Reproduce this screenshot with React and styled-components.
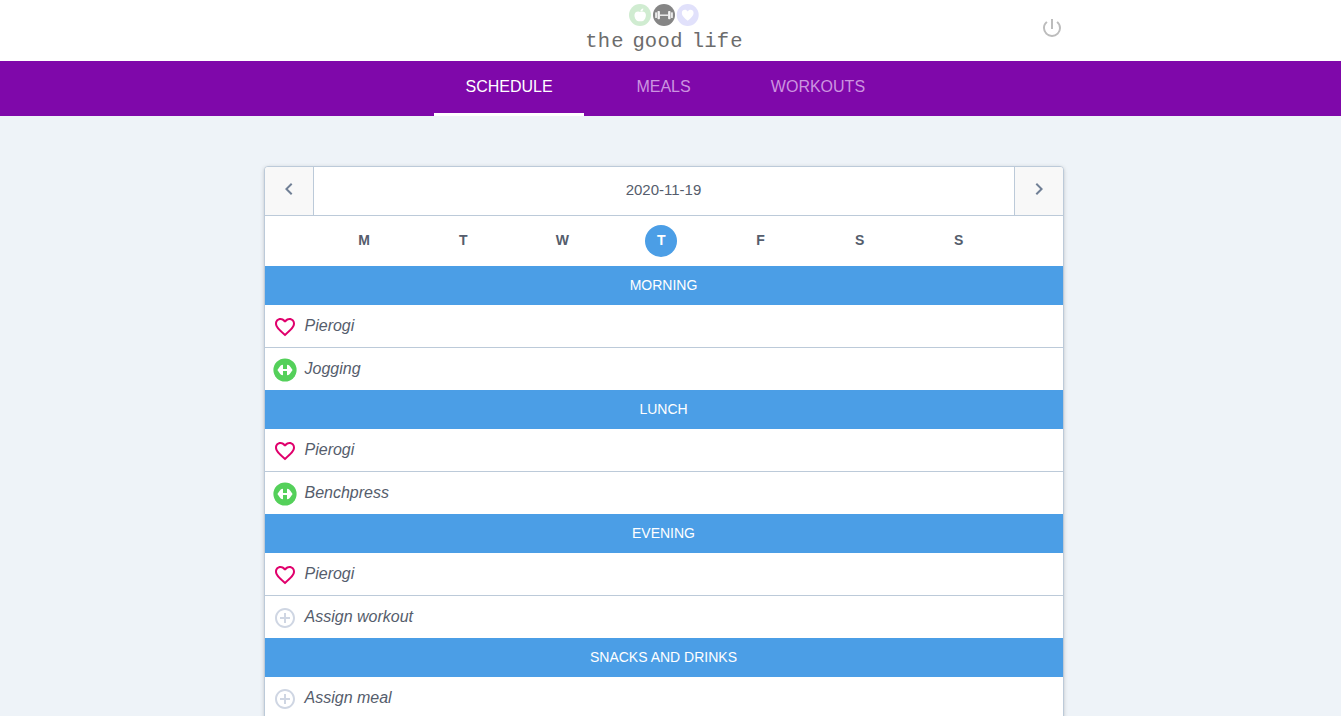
import React from "react";
import styled, { createGlobalStyle } from "styled-components";
import {
  MdAddCircleOutline,
  MdChevronLeft,
  MdChevronRight,
  MdFavoriteBorder,
  MdPowerSettingsNew,
} from "react-icons/md";

const GlobalStyle = createGlobalStyle`
  *, *::before, *::after { box-sizing: border-box; }
  html, body { margin: 0; height: 100%; overflow: hidden; }
  body {
    background: #eef3f8;
    color: #555d6c;
    font-family: "Liberation Sans", Arial, sans-serif;
    font-size: 16px;
    line-height: 24px;
  }
  svg { display: block; }
`;

const Page = styled.div`
  height: 716px;
  overflow: hidden;
`;

const TopBar = styled.header`
  height: 61px;
  padding-right: 13px;
  background: #fff;
`;

const TopBarInner = styled.div`
  display: grid;
  grid-template-columns: 1fr auto 1fr;
  width: 800px;
  height: 56px;
  margin: 0 auto;
`;

const LogoSlot = styled.div`
  grid-column: 2;
`;

const PowerButton = styled.button`
  grid-column: 3;
  justify-self: end;
  align-self: center;
  padding: 0;
  border: 0;
  background: none;
  color: #bcbcbc;
  font-size: 24px;
`;

const Nav = styled.nav`
  display: flex;
  justify-content: center;
  gap: 4.45px;
  height: 55px;
  padding-right: 14px;
  background: #7f08aa;
`;

const Tab = styled.a`
  width: 150px;
  padding-top: 14px;
  text-align: center;
  color: ${(p) => (p.$active ? "#fff" : "#cc94e0")};
  border-bottom: 3px solid ${(p) => (p.$active ? "#fff" : "transparent")};
`;

const Main = styled.main`
  padding: 50px 14px 0 0;
`;

const Card = styled.section`
  width: 800px;
  margin: 0 auto;
  border: 1px solid #bccad9;
  border-radius: 4px;
  background: #fff;
  overflow: hidden;
  box-shadow: 0 1px 3px rgba(0, 0, 0, 0.1), 0 1px 5px rgba(0, 0, 0, 0.1);
`;

const DateBar = styled.div`
  display: flex;
  height: 49px;
  border-bottom: 1px solid #bccad9;
`;

const Arrow = styled.button`
  display: flex;
  align-items: center;
  justify-content: center;
  width: 49px;
  padding: 0 0 4px;
  border: 0 solid #bccad9;
  border-left-width: ${(p) => (p.$side === "right" ? "1px" : 0)};
  border-right-width: ${(p) => (p.$side === "left" ? "1px" : 0)};
  background: #f8f8f8;
  color: #718096;
  font-size: 24px;
`;

const DateLabel = styled.div`
  flex: 1;
  padding-top: 11px;
  text-align: center;
  font-size: 15px;
`;

const Week = styled.div`
  display: flex;
  gap: 67.1px;
  height: 50px;
  padding: 9px 0 0 83.6px;
`;

const Day = styled.div`
  flex: none;
  width: 32px;
  height: 32px;
  border-radius: 50%;
  text-align: center;
  font-size: 14px;
  font-weight: 700;
  line-height: 31px;
  background: ${(p) => (p.$active ? "#4b9ee6" : "transparent")};
  color: ${(p) => (p.$active ? "#fff" : "inherit")};
`;

const SectionTitle = styled.h2`
  height: 39px;
  margin: 0;
  background: #4b9ee6;
  color: #fff;
  text-align: center;
  font-size: 14px;
  font-weight: 400;
  line-height: 39px;
`;

const Row = styled.div`
  display: flex;
  gap: 8px;
  height: 42px;
  padding: 10px 8px 0;
  font-style: italic;

  & + & {
    height: 43px;
    border-top: 1px solid #bccad9;
  }
`;

const RowIcon = styled.span`
  color: ${(p) => p.$color};
  font-size: 24px;
`;

const RowText = styled.span`
  margin-top: -1px;
`;

const Dumbbell = () => (
  <svg width="24" height="24" viewBox="0 0 24 24">
    <circle cx="12" cy="12" r="11.6" fill="currentColor" />
    <path
      d="M4.400 12l2.300-3.200C7.500 7.500 8.300 6.800 10 6.800v4.300h4V6.800c1.700 0 2.500.7 3.300 2L19.600 12l-2.300 3.200c-.8 1.300-1.600 2-3.300 2v-4.300h-4v4.300c-1.700 0-2.500-.7-3.300-2z"
      fill="#fff"
    />
  </svg>
);

const ICONS = {
  meal: { Icon: MdFavoriteBorder, color: "#e0006c" },
  workout: { Icon: Dumbbell, color: "#54d05a" },
  empty: { Icon: MdAddCircleOutline, color: "#cfd6e3" },
};

const LogoText = styled.text`
  font-family: "Liberation Mono", monospace;
  font-size: 20.5px;
  text-anchor: middle;
  fill: #6c6c6c;
`;

const Logo = () => (
  <svg width="170" height="56" viewBox="579 0 170 56">
    <circle cx="640" cy="15" r="11" fill="#d0ecd1" />
    <path
      d="M640.3 11.4c.2-1.7 1.2-2.7 3-3 .1 1.8-1 3-3 3zM640.2 12c1.400-.8 3.400-.8 4.800.6 1.700 2.200.8 5.800-1.200 8-1.200 1.200-2.300.6-3.600.6s-2.400.6-3.600-.6c-2-2.200-2.900-5.800-1.200-8 1.400-1.400 3.400-1.400 4.800-.6z"
      fill="#fff"
    />
    <circle cx="664" cy="15" r="11" fill="#858585" />
    <g fill="#f4f4f4">
      <rect x="660" y="14.500" width="8" height="1.400" />
      <rect x="657.500" y="11" width="2.400" height="8.200" rx=".8" />
      <rect x="655.200" y="12.200" width="1.700" height="5.800" rx=".6" />
      <rect x="668.100" y="11" width="2.400" height="8.200" rx=".8" />
      <rect x="671.100" y="12.200" width="1.700" height="5.800" rx=".6" />
    </g>
    <circle cx="687.700" cy="15" r="11" fill="#e1e1fb" />
    <path
      d="M687.700 20.800c-3.500-3.100-5.900-5.200-5.900-7.800 0-3.400 4.200-4.300 5.900-1.500 1.700-2.800 5.900-1.900 5.900 1.500 0 2.600-2.400 4.700-5.900 7.800z"
      fill="#fff"
    />
    <LogoText
      x="591.500 604 617.300 628 638.700 651 663.600 676.500 688 698 710.500 723 736.300"
      y="47"
    >
      the good life
    </LogoText>
  </svg>
);

const DAYS = ["M", "T", "W", "T", "F", "S", "S"];

const SECTIONS = [
  { title: "MORNING", rows: [["meal", "Pierogi"], ["workout", "Jogging"]] },
  { title: "LUNCH", rows: [["meal", "Pierogi"], ["workout", "Benchpress"]] },
  { title: "EVENING", rows: [["meal", "Pierogi"], ["empty", "Assign workout"]] },
  { title: "SNACKS AND DRINKS", rows: [["empty", "Assign meal"]] },
];

export default function App() {
  return (
    <Page>
      <GlobalStyle />
      <TopBar>
        <TopBarInner>
          <LogoSlot>
            <Logo />
          </LogoSlot>
          <PowerButton aria-label="Log out">
            <MdPowerSettingsNew />
          </PowerButton>
        </TopBarInner>
      </TopBar>
      <Nav>
        <Tab $active>SCHEDULE</Tab>
        <Tab>MEALS</Tab>
        <Tab>WORKOUTS</Tab>
      </Nav>
      <Main>
        <Card>
          <DateBar>
            <Arrow $side="left" aria-label="Previous day">
              <MdChevronLeft />
            </Arrow>
            <DateLabel>2020-11-19</DateLabel>
            <Arrow $side="right" aria-label="Next day">
              <MdChevronRight />
            </Arrow>
          </DateBar>
          <Week>
            {DAYS.map((d, i) => (
              <Day key={i} $active={i === 3}>
                {d}
              </Day>
            ))}
          </Week>
          {SECTIONS.map(({ title, rows }) => (
            <div key={title}>
              <SectionTitle>{title}</SectionTitle>
              {rows.map(([kind, label]) => {
                const { Icon, color } = ICONS[kind];
                return (
                  <Row key={label}>
                    <RowIcon $color={color}>
                      <Icon />
                    </RowIcon>
                    <RowText>{label}</RowText>
                  </Row>
                );
              })}
            </div>
          ))}
        </Card>
      </Main>
    </Page>
  );
}
